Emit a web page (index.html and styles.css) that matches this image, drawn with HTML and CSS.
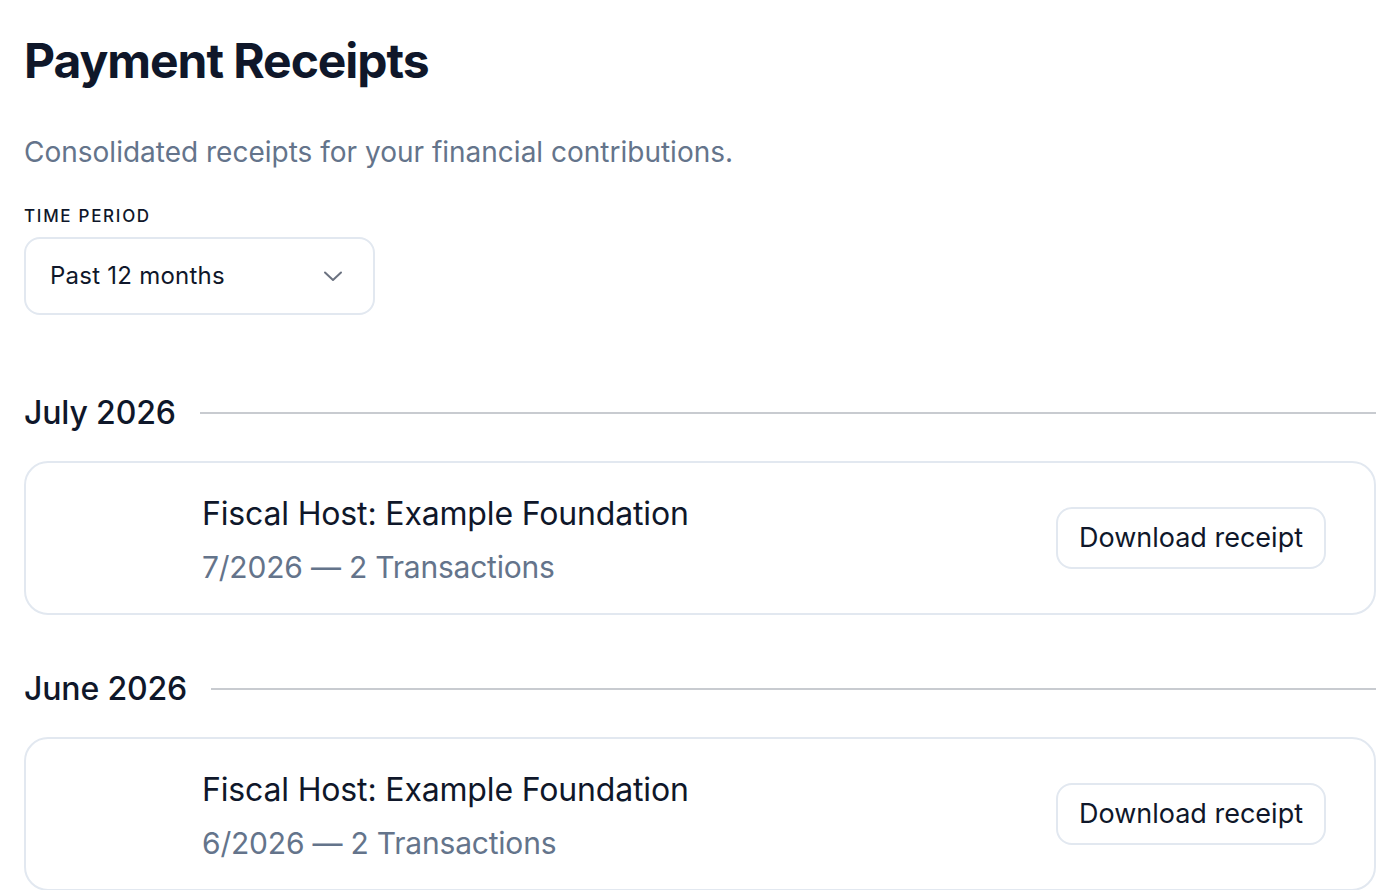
FILE: index.html
```html
<!DOCTYPE html>
<html lang="en">
<head>
    <meta charset="UTF-8" />
    <meta name="viewport" content="width=device-width, initial-scale=1.0"/>
    <title>Payment Receipts</title>
    <link rel="stylesheet" href="styles.css">
</head>
<body>
    <div class="page">
        <h1 class="page-title">Payment Receipts</h1>
        <p class="page-subtitle">Consolidated receipts for your financial contributions.</p>

        <div class="filter">
            <label class="filter-label" for="period">Time period</label>
            <div class="select">
                <span class="select-value">Past 12 months</span>
                <svg class="select-chevron" width="20" height="20" viewBox="0 0 20 20" fill="none">
                    <path d="M2 6.5l8 7.5 8-7.5" stroke="currentColor" stroke-width="2" stroke-linecap="round" stroke-linejoin="round"/>
                </svg>
            </div>
        </div>

        <section class="month">
            <div class="month-header">
                <h3 class="month-title">July 2026</h3>
                <div class="month-rule"></div>
            </div>
            <div class="receipt-card">
                <div class="host-logo"></div>
                <div class="receipt-info">
                    <div class="receipt-host">Fiscal Host: Example Foundation</div>
                    <div class="receipt-meta">7/2026 — 2 Transactions</div>
                </div>
                <button type="button" class="button">Download receipt</button>
            </div>
        </section>

        <section class="month">
            <div class="month-header">
                <h3 class="month-title">June 2026</h3>
                <div class="month-rule"></div>
            </div>
            <div class="receipt-card">
                <div class="host-logo"></div>
                <div class="receipt-info">
                    <div class="receipt-host">Fiscal Host: Example Foundation</div>
                    <div class="receipt-meta">6/2026 — 2 Transactions</div>
                </div>
                <button type="button" class="button">Download receipt</button>
            </div>
        </section>
    </div>
</body>
</html>
```

FILE: styles.css
```css
body {
    font-family: Inter, "Noto Sans", sans-serif;
    background-color: #fff;
    margin: 0;
    padding: 0;
    color: #0f172a;
}

.page {
    padding: 32px 24px 24px 24px;
}

.page-title {
    font-size: 48px;
    font-weight: 700;
    line-height: 1.2;
    letter-spacing: -0.022em;
    margin: 0;
}

.page-subtitle {
    font-size: 28px;
    line-height: 42px;
    color: #64748b;
    margin: 41px 0 0 0;
}

.filter {
    margin-top: 31px;
}

.filter-label {
    display: block;
    font-size: 17px;
    line-height: 24px;
    font-weight: 500;
    letter-spacing: 0.1em;
    text-transform: uppercase;
    margin-bottom: 9px;
}

.select {
    width: 351px;
    height: 78px;
    box-sizing: border-box;
    border: 2px solid #e2e8f0;
    border-radius: 16px;
    padding: 0 30px 0 24px;
    display: flex;
    align-items: center;
    justify-content: space-between;
    font-size: 24px;
    letter-spacing: 0.01em;
}

.select-chevron {
    color: #6b7280;
}

/* month sections */
.month {
    margin-top: 50px;
}

.filter + .month {
    margin-top: 74px;
}

.month-header {
    display: flex;
    align-items: center;
    gap: 24px;
    margin-bottom: 24px;
}

.month-title {
    font-size: 32px;
    font-weight: 500;
    line-height: 48px;
    letter-spacing: -0.005em;
    margin: 0;
    white-space: nowrap;
}

.month-rule {
    flex: 1;
    height: 2px;
    background-color: #c8cbd0;
}

.receipt-card {
    display: flex;
    align-items: center;
    gap: 24px;
    min-height: 154px;
    box-sizing: border-box;
    border: 2px solid #e2e8f0;
    border-radius: 24px;
    padding: 24px 48px 24px 24px;
}

.host-logo {
    width: 128px;
    flex-shrink: 0;
}

.receipt-info {
    flex: 1;
    padding-top: 6px;
}

.receipt-host {
    font-size: 32px;
    line-height: 40px;
    letter-spacing: -0.005em;
}

.receipt-meta {
    font-size: 30px;
    line-height: 40px;
    letter-spacing: -0.007em;
    color: #64748b;
    margin-top: 13px;
}

.button {
    height: 62px;
    padding: 0 21px;
    border: 2px solid #e2e8f0;
    border-radius: 16px;
    background-color: #fff;
    color: #0f172a;
    font-family: inherit;
    font-size: 27px;
    cursor: pointer;
}

.button:hover {
    background-color: #f8fafc;
}
```
